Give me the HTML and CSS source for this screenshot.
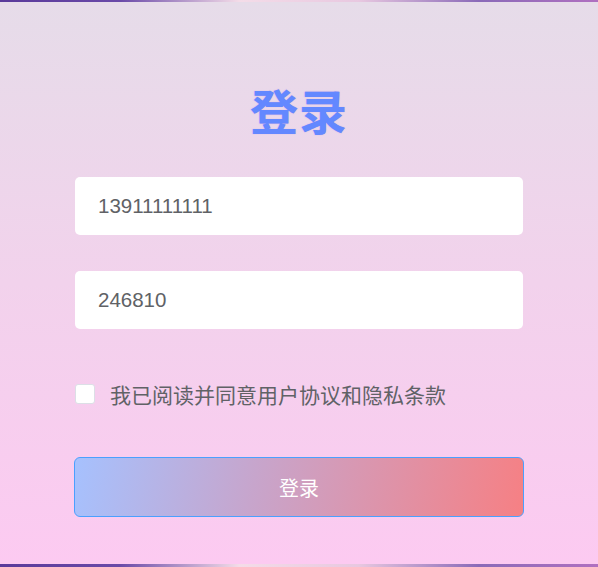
FILE: index.html
```html
<!DOCTYPE html>
<html lang="zh-CN">
<head>
    <meta charset="UTF-8">
    <title>登录</title>
    <meta name="viewport" content="width=device-width, initial-scale=1">
    <link rel="stylesheet" href="styles.css">
</head>
<body>

<div class="page">
    <div class="panel">
        <div class="title">登录</div>
        <form class="form">
            <input class="field" type="text" value="13911111111">
            <input class="field" type="text" value="246810">
            <label class="agree">
                <span class="check"></span>
                <span class="agree-text">我已阅读并同意用户协议和隐私条款</span>
            </label>
            <button class="button" type="button">登录</button>
        </form>
    </div>
</div>

</body>
</html>
```

FILE: styles.css
```css
* {
    box-sizing: border-box;
    font-family: "Liberation Sans", Arial, "Noto Sans CJK SC", sans-serif;
}

body {
    margin: 0;
    height: 100vh;
    width: 100vw;
    overflow: hidden;
    background: linear-gradient(90deg, #5a3a9a 0%, #6a4aa8 20%, #f4dce8 40%, #e8c8e0 60%, #8a6ab8 80%, #b070c0 100%);
}

.page {
    padding: 2px 0 3px 0;
    height: 100%;
}

.panel {
    height: 100%;
    background: linear-gradient(180deg, #e6dce9 0%, #f2d2ec 50%, #fccaf1 100%);
    display: flex;
    flex-direction: column;
    align-items: center;
}

.title {
    margin-top: 82px;
    font-size: 48px;
    font-weight: bold;
    line-height: 60px;
    color: #6388ff;
    text-shadow: 0 0 1px rgba(160, 100, 220, 0.5);
    letter-spacing: 1px;
}

.form {
    width: 448px;
    margin-top: 33px;
    display: flex;
    flex-direction: column;
}

.field {
    height: 58px;
    border: none;
    border-radius: 5px;
    background: #fff;
    padding: 0 23px;
    font-size: 20.5px;
    color: #606266;
    outline: none;
    margin-bottom: 36px;
}

.agree {
    display: flex;
    align-items: center;
    margin-top: 14px;
    height: 30px;
}

.check {
    width: 20px;
    height: 20px;
    background: #fff;
    border: 1px solid #dcdfe6;
    border-radius: 3px;
}

.agree-text {
    margin-left: 15px;
    font-size: 21px;
    color: #606266;
}

.button {
    margin-top: 48px;
    margin-left: -1px;
    width: 450px;
    height: 60px;
    border: 1px solid #4aa0ff;
    border-radius: 6px;
    background: linear-gradient(100deg, #a6c1fe 0%, #c7a5cc 40%, #f68084 100%);
    color: #fff;
    font-size: 20px;
    cursor: pointer;
}
```
